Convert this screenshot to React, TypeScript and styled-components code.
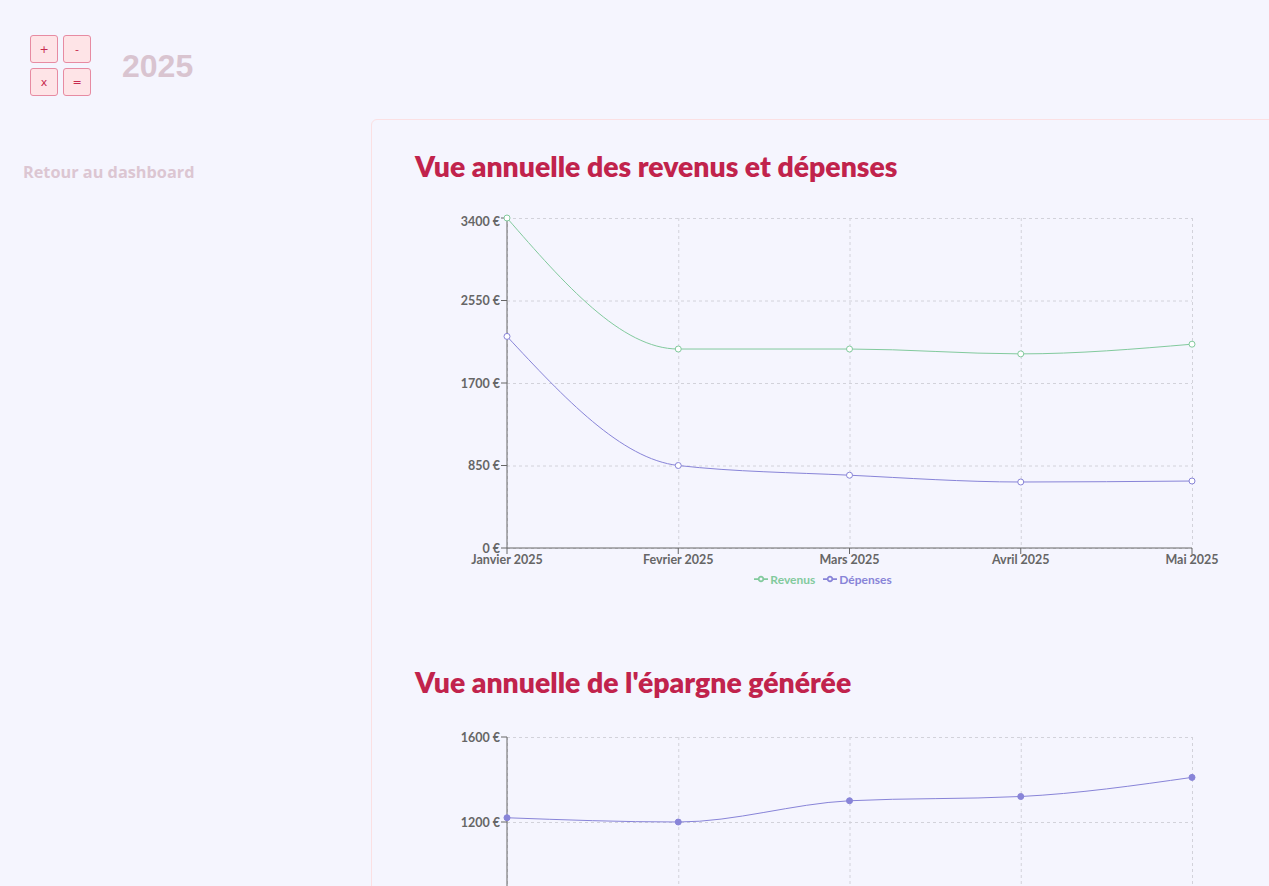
import React from "react";
import styled, { createGlobalStyle } from "styled-components";

const Global = createGlobalStyle`
  html, body { margin: 0; padding: 0; overflow: hidden; background: #f5f5fe; }
  body { font-family: Lato, "Noto Sans", sans-serif; }
`;

const Page = styled.div`
  min-height: 886px;
  background: #f5f5fe;
`;

const Header = styled.header`
  display: flex;
  align-items: center;
  gap: 31px;
  padding: 35px 0 0 30px;
`;

const Keypad = styled.div`
  display: grid;
  grid-template-columns: repeat(2, 28px);
  grid-auto-rows: 28px;
  gap: 5px;
`;

const Key = styled.button`
  box-sizing: border-box;
  width: 28px;
  height: 28px;
  padding: 0;
  border: 1px solid #e78ba2;
  border-radius: 3px;
  background: #fee4e7;
  color: #c72a4f;
  font-family: "DejaVu Sans", sans-serif;
  font-size: 11px;
  line-height: 1;
  display: flex;
  align-items: center;
  justify-content: center;
`;

const Year = styled.h1`
  margin: 0;
  font-family: "Liberation Sans", Arial, sans-serif;
  font-weight: 700;
  font-size: 32px;
  color: #d9c4d0;
  line-height: 1;
`;

const Main = styled.div`
  display: grid;
  grid-template-columns: 371px 920px;
  margin-top: 23px;
`;

const Sidebar = styled.nav`
  padding: 42px 0 0 23px;
`;

const BackLink = styled.a`
  font-family: "Open Sans", sans-serif;
  font-weight: 700;
  font-size: 16.3px;
  color: #dcc6d2;
  text-decoration: none;
  line-height: 22px;
`;

const Card = styled.section`
  box-sizing: border-box;
  border: 1px solid #fbe0e3;
  border-radius: 6px;
  padding: 29px 0 40px 43px;
  min-height: 900px;
`;

const Block = styled.div<{ $gap: number }>`
  display: flex;
  flex-direction: column;
  gap: ${(p) => p.$gap}px;
  margin-bottom: 77px;
`;

const Title = styled.h2`
  margin: 0;
  font-family: Lato, sans-serif;
  font-weight: 800;
  font-size: 28.4px;
  line-height: 34px;
  color: #c1234c;
`;

const ChartBox = styled.div`
  width: 816px;
  display: flex;
  flex-direction: column;
`;

const Legend = styled.ul`
  list-style: none;
  margin: 0;
  padding: 0;
  display: flex;
  justify-content: center;
  gap: 8px;
  height: 18px;
  align-items: center;
`;

const LegendItem = styled.li<{ $color: string }>`
  display: flex;
  align-items: center;
  gap: 2px;
  font-family: Lato, sans-serif;
  font-weight: 700;
  font-size: 12px;
  color: ${(p) => p.$color};
`;

type Series = { name: string; color: string; values: number[]; filled?: boolean };

function monotonePath(pts: [number, number][]): string {
  const n = pts.length;
  if (n < 2) return "";
  const sign = (x: number) => (x < 0 ? -1 : 1);
  const t: number[] = new Array(n).fill(0);
  for (let i = 1; i < n - 1; i++) {
    const [x0, y0] = pts[i - 1];
    const [x1, y1] = pts[i];
    const [x2, y2] = pts[i + 1];
    const h0 = x1 - x0, h1 = x2 - x1;
    const s0 = (y1 - y0) / h0, s1 = (y2 - y1) / h1;
    const p = (s0 * h1 + s1 * h0) / (h0 + h1);
    t[i] = (sign(s0) + sign(s1)) * Math.min(Math.abs(s0), Math.abs(s1), 0.5 * Math.abs(p)) || 0;
  }
  if (n === 2) {
    const s = (pts[1][1] - pts[0][1]) / (pts[1][0] - pts[0][0]);
    t[0] = s; t[1] = s;
  } else {
    const h = pts[1][0] - pts[0][0];
    t[0] = (3 * (pts[1][1] - pts[0][1]) / h - t[1]) / 2;
    const hl = pts[n - 1][0] - pts[n - 2][0];
    t[n - 1] = (3 * (pts[n - 1][1] - pts[n - 2][1]) / hl - t[n - 2]) / 2;
  }
  let d = `M${pts[0][0]},${pts[0][1]}`;
  for (let i = 0; i < n - 1; i++) {
    const [x0, y0] = pts[i];
    const [x1, y1] = pts[i + 1];
    const dx = (x1 - x0) / 3;
    d += `C${x0 + dx},${y0 + dx * t[i]},${x1 - dx},${y1 - dx * t[i + 1]},${x1},${y1}`;
  }
  return d;
}

type ChartProps = {
  labels: string[];
  series: Series[];
  yMax: number;
  yStep: number;
  height: number;
  plotTop: number;
  plotBottom: number;
  legend?: boolean;
};

const PL = 92;
const PR = 777;

function LineChart({ labels, series, yMax, yStep, height, plotTop, plotBottom, legend }: ChartProps) {
  const xs = labels.map((_, i) => PL + ((PR - PL) * i) / (labels.length - 1));
  const y = (v: number) => plotBottom - ((plotBottom - plotTop) * v) / yMax;
  const ticks: number[] = [];
  for (let v = 0; v <= yMax; v += yStep) ticks.push(v);
  return (
    <ChartBox>
      <svg width={816} height={height} style={{ display: "block", overflow: "visible" }}>
        <g stroke="#d2d2da" strokeDasharray="3 3" fill="none">
          {ticks.map((v) => (
            <line key={"h" + v} x1={PL} x2={PR} y1={y(v) + 0.5} y2={y(v) + 0.5} />
          ))}
          {xs.map((x, i) => (
            <line key={"v" + i} x1={x + 0.5} x2={x + 0.5} y1={plotTop} y2={plotBottom} />
          ))}
        </g>
        <g stroke="#666" fill="none">
          <line x1={PL} x2={PL} y1={plotTop} y2={plotBottom} />
          <line x1={PL} x2={PR} y1={plotBottom} y2={plotBottom} />
          {ticks.map((v) => (
            <line key={"yt" + v} x1={PL - 6} x2={PL} y1={y(v)} y2={y(v)} />
          ))}
          {xs.map((x, i) => (
            <line key={"xt" + i} x1={x} x2={x} y1={plotBottom} y2={plotBottom + 6} />
          ))}
        </g>
        <g fill="#666" fontFamily="Lato, sans-serif" fontWeight={700} fontSize={12.5}>
          {ticks.map((v) => (
            <text key={"yl" + v} x={PL - 7} y={y(v) + (v === yMax && yMax === 3400 ? 8 : 4.5)} textAnchor="end">
              {v} €
            </text>
          ))}
          {labels.map((l, i) => (
            <text key={"xl" + i} x={xs[i]} y={plotBottom + 15.5} textAnchor="middle">
              {l}
            </text>
          ))}
        </g>
        {series.map((s) => {
          const pts = s.values.map((v, i) => [xs[i], y(v)] as [number, number]);
          return (
            <g key={s.name}>
              <path d={monotonePath(pts)} fill="none" stroke={s.color} strokeWidth={1} />
              {pts.map(([px, py], i) => (
                <circle
                  key={i}
                  cx={px}
                  cy={py}
                  r={3}
                  fill={s.filled ? s.color : "#fff"}
                  stroke={s.color}
                  strokeWidth={1}
                />
              ))}
            </g>
          );
        })}
      </svg>
      {legend && (
        <Legend>
          {series.map((s) => (
            <LegendItem key={s.name} $color={s.color}>
              <svg width={14} height={14} viewBox="0 0 32 32">
                <path
                  d="M0,16h10.67A5.33,5.33,0,1,1,21.33,16H32M21.33,16A5.33,5.33,0,1,1,10.67,16"
                  fill="none"
                  stroke={s.color}
                  strokeWidth={4}
                />
              </svg>
              {s.name}
            </LegendItem>
          ))}
        </Legend>
      )}
    </ChartBox>
  );
}

const months = ["Janvier 2025", "Fevrier 2025", "Mars 2025", "Avril 2025", "Mai 2025"];
const revenus = [3400, 2050, 2050, 2000, 2100];
const depenses = [2180, 850, 750, 680, 690];
const epargne = revenus.map((r, i) => r - depenses[i]);

export default function App() {
  return (
    <Page>
      <Global />
      <Header>
        <Keypad>
          <Key>+</Key>
          <Key>-</Key>
          <Key>x</Key>
          <Key>=</Key>
        </Keypad>
        <Year>2025</Year>
      </Header>
      <Main>
        <Sidebar>
          <BackLink href="#">Retour au dashboard</BackLink>
        </Sidebar>
        <Card>
          <Block $gap={17}>
            <Title>Vue annuelle des revenus et dépenses</Title>
            <LineChart
              labels={months}
              series={[
                { name: "Revenus", color: "#82ca9d", values: revenus },
                { name: "Dépenses", color: "#8884d8", values: depenses },
              ]}
              yMax={3400}
              yStep={850}
              height={370}
              plotTop={18}
              plotBottom={348}
              legend
            />
          </Block>
          <Block $gap={20}>
            <Title>Vue annuelle de l'épargne générée</Title>
            <LineChart
              labels={months}
              series={[{ name: "Épargne", color: "#8884d8", values: epargne, filled: true }]}
              yMax={1600}
              yStep={400}
              height={380}
              plotTop={18}
              plotBottom={358}
            />
          </Block>
        </Card>
      </Main>
    </Page>
  );
}
